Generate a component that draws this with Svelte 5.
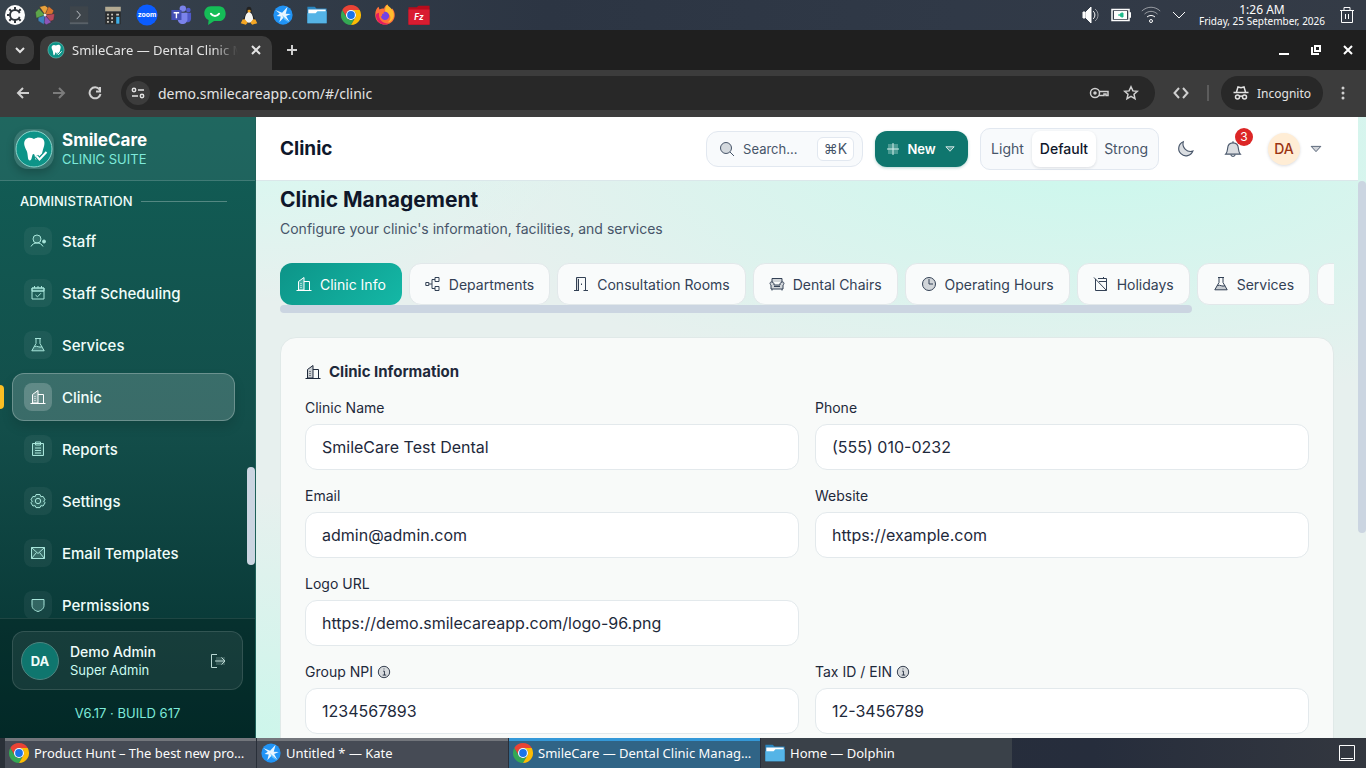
<script lang="ts">
	interface NavItem {
		label: string;
		icon: string;
	}

	interface Field {
		id: string;
		label: string;
		value: string;
		info?: boolean;
		solo?: boolean;
	}

	// Line icons on a 16 unit grid, stroked with the current colour
	const icons: Record<string, string> = {
		staff:
			'<circle cx="7" cy="6" r="4" fill="currentColor" fill-opacity=".15"/><path d="M1 13.500c1.200-2.200 3-3.500 6-3.500s4.800 1.300 6 3.500"/><circle cx="14" cy="8.500" r="1.500" fill="currentColor"/>',
		schedule:
			'<path d="M2 3h12v11H2z"/><path d="M2 6h12" /><path d="M2 3h12v3H2z" fill="currentColor" fill-opacity=".2"/><path d="M4.500 1v2M11.500 1v2M8 1v2M5.500 10l2 1.800 3.500-3.600"/>',
		flask:
			'<path d="M4 9.500 1.800 13.800h12.400L12 9.500c-3-1.200-5 1.200-8 0z" fill="currentColor" fill-opacity=".25" stroke="none"/><path d="M5 1.500h6M6 1.500v5L1.800 13.800h12.400L10 6.500v-5M4.300 9.500c3-1.200 5 1.800 7.800.2"/>',
		building:
			'<path d="M2.500 14V5.500l5.500-4V14z" fill="currentColor" fill-opacity=".2"/><path d="M.5 14.500h15M8 5.500h5.500V14M5 7v1M5 9v1M5 11v1"/>',
		report:
			'<path d="M2.500 2.500h11v12h-11z" fill="currentColor" fill-opacity=".15"/><path d="M5.500 1h5v3h-5zM5 7h6M5 9.500h6M5 12h6"/>',
		gear:
			'<path d="M6 1.500h4l.8 2.200 2.300-.3 2 3.400L13.600 8l1.500 1.800-2 3.200-2.300-.3-.8 1.900H6l-.8-1.900-2.300.3-2-3.200L2.400 8 .9 6.800l2-3.400 2.300.3z" fill="currentColor" fill-opacity=".15"/><circle cx="8" cy="8" r="2.700"/>',
		mail:
			'<path d="M1.500 2.500h13v11h-13z" fill="currentColor" fill-opacity=".2"/><path d="m1.500 2.500 6.500 6 6.500-6M1.500 13.500l5-6M14.500 13.500l-5-6"/>',
		shield:
			'<path d="M2 2.500h12v6c0 3-2.500 5-6 6-3.500-1-6-3-6-6z" fill="currentColor" fill-opacity=".2"/>',
		departments:
			'<path d="M.8 6.500h3v3h-3zM10 1.500h4v4h-4zM10 10.500h4v4h-4zM4 8h3M10 3.500H7v9h3"/>',
		door:
			'<path d="M3.500 14V1.500h9V14M1 14.500h5M10.500 14.500H15M5.500 14.500V3"/><path d="M3.500 1.500h2v13h-2z" fill="currentColor" fill-opacity=".2" stroke="none"/><path d="M8.500 7.500V9"/>',
		chair:
			'<path d="M3 6V2.500h10V6M3 6c-2-.5-2.700 2-1 3v4h12V9c1.700-1 1-3.500-1-3s-2 1.500-2 3H5c0-1.500 0-2.500-2-3zM3 13v1.500M13 13v1.500" fill="currentColor" fill-opacity=".2"/><path d="M5 10.500h6"/>',
		clock:
			'<circle cx="8" cy="8" r="6.500" fill="currentColor" fill-opacity=".2"/><path d="M8 3v5h4"/>',
		holiday:
			'<path d="M2.500 3v11.500h11V2.500H5M1 1.500l12.500 13M6 5.500h7.500M10.500 1v2"/>',
		search:
			'<circle cx="7" cy="7" r="5.500" fill="currentColor" fill-opacity=".2"/><path d="m11 11 4 4"/>',
		moon:
			'<path d="M6.500 1.500a6.500 6.500 0 1 0 8.500 8.300C10 11.500 5 7 6.500 1.500z" fill="currentColor" fill-opacity=".2"/>',
		bell:
			'<path d="M1.500 12.500c1.500-1.500 1.500-3 1.700-5 .2-3 2-5 4.800-5s4.600 2 4.800 5c.2 2 .2 3.500 1.700 5z" fill="currentColor" fill-opacity=".2"/><path d="M8 1v1.500M6 13c.5 2 3.500 2 4 0"/>',
		caret: '<path d="M2.500 5h11L8 11z" fill="currentColor" fill-opacity=".25"/>',
		info:
			'<circle cx="8" cy="8" r="6.500" fill="currentColor" fill-opacity=".15"/><path d="M7 7h1.500v4.500M6.500 11.500h4M7.500 4.500h1"/>',
		logout:
			'<path d="M6 4h9v8H6z" fill="currentColor" fill-opacity=".2" stroke="none"/><path d="M7 1.500H1.500v13H7M5 8h10M11.500 4.500 15 8l-3.500 3.500"/>'
	};

	const chromeLogo =
		'<path fill="#ea4335" d="M4.950 13A22 22 0 0 1 43.050 13H24a11 11 0 0 0-9.530 16.500z"/><path fill="#34a853" d="M4.950 13 14.470 29.500a11 11 0 0 0 19.060 0L24 46A22 22 0 0 1 4.950 13z"/><path fill="#fbbc04" d="M43.050 13A22 22 0 0 1 24 46l9.530-16.500A11 11 0 0 0 24 13z"/><circle cx="24" cy="24" r="11" fill="#fff"/><circle cx="24" cy="24" r="8.500" fill="#1a73e8"/>';
	const folderLogo =
		'<path fill="#2a86c0" d="M3 6h16l4 4h22v32H3z"/><path fill="#fff" d="M5 12h38v10H5z"/><path fill="#55b4e6" d="M3 20h18l4-4h20v26H3z"/>';
	const kateLogo =
		'<circle cx="24" cy="24" r="21" fill="#2093f5"/><path fill="#e8f5ff" d="m7 13 15 6 12-13-4 15 11 1-10 4 7 13-12-10-10 11 3-13-9-1 7-5z"/><path fill="#62c4ff" d="m22 24 15 17-11-8z"/>';

	const launchers = [
		{
			name: 'Photos',
			art: '<g stroke="#333" stroke-width="1"><path fill="#e9a23b" d="M24 24 12 6l12-3 8 6z"/><path fill="#d9742f" d="M24 24 32 5l11 9-3 9z"/><path fill="#b9485c" d="M24 24l21-3-2 14-8 3z"/><path fill="#8c55b8" d="m24 24 14 16-11 5-8-5z"/><path fill="#3d83bd" d="m24 24-2 21-13-8V27z"/><path fill="#5da64a" d="M24 24 5 31 3 18l8-8z"/></g><circle cx="24" cy="24" r="3" fill="#eee"/>'
		},
		{
			name: 'Terminal',
			art: '<path fill="#3e454b" d="M4 5h40v38H4z"/><path fill="#596168" d="M4 40h40v4H4z"/><path d="m19 15 8 9-8 9" fill="none" stroke="#c7cbce" stroke-width="2"/>'
		},
		{
			name: 'Calculator',
			art: '<path fill="#b3aa92" d="M7 6h34v10H7z"/><path fill="#2b2d2e" d="M7 17h34v27H7z"/><path fill="#c9c6be" d="M11 21h4v4h-4zM20 21h4v4h-4zM11 29h4v4h-4zM20 29h4v4h-4zM11 37h4v4h-4zM20 37h4v4h-4zM31 21h6v4h-6z"/><path fill="#3daee9" d="M31 28h7v15h-7z"/>'
		},
		{
			name: 'Zoom',
			art: '<circle cx="24" cy="24" r="23" fill="#0b5cff"/><text x="24" y="29" text-anchor="middle" font-family="Inter, sans-serif" font-size="15" font-weight="700" fill="#fff">zoom</text>'
		},
		{
			name: 'Teams',
			art: '<circle cx="28" cy="10" r="7" fill="#7b83eb"/><circle cx="40" cy="13" r="5" fill="#5059c9"/><path fill="#5059c9" d="M32 19h14v13c0 5-4 8-9 8z"/><path fill="#7b83eb" d="M17 19h21v14c0 14-21 14-21 0z"/><path fill="#4450b5" d="M3 13h22v22H3z"/><path stroke="#fff" stroke-width="3" d="M8 19h12M14 19v12"/>'
		},
		{
			name: 'Messages',
			art: '<path fill="#15bd57" d="M15 5h18c19 0 19 32 0 32H22L9 46l1-11C-5 29-1 5 15 5z"/><path d="M15 21c5 7 13 7 18 0" fill="none" stroke="#fff" stroke-width="4" stroke-linecap="round"/>'
		},
		{
			name: 'Tux',
			art: '<path fill="#222" d="M24 6c-6 0-6 8-6 13l-7 14c0 11 26 11 26 0l-7-14c0-5 0-13-6-13z"/><path fill="#f5f5f2" d="M24 17c-6 2-9 10-9 17 0 9 18 9 18 0 0-7-3-15-9-17z"/><path fill="#f5a623" d="m20 15 4-3 5 3-5 4zM10 34l5-1 6 8-4 4-11-3zM38 34l-5-1-6 8 4 4 11-3z"/>'
		},
		{ name: 'Kate', art: kateLogo },
		{ name: 'Dolphin', art: folderLogo },
		{ name: 'Chrome', art: chromeLogo },
		{
			name: 'Firefox',
			art: '<path fill="#ff7139" d="M5 12c2-3 3-5 5-6l2 6c5-3 9-2 10-2 1-4 3-7 7-9 1 5 5 7 9 12l2-3c4 5 6 11 5 17C41 51 6 50 3 27c-.7-6 0-11 2-15z"/><path fill="#ffbd2e" d="M29 1c1 5 17 10 14 26-2 8-8 13-13 13 9-6 8-18-5-22-2-6 0-13 4-17z"/><path fill="#e51c62" d="M4 26c3 18 19 22 29 17-13 0-24-8-22-24-5 1-7 3-7 7z"/><circle cx="24" cy="26" r="9" fill="#7542e5"/><path fill="#ff7139" d="M11 17c5-3 9-1 12 3-5 0-7 3-5 7-4 0-7-4-7-10z"/>'
		},
		{
			name: 'FileZilla',
			art: '<path fill="#b80c1c" d="M1 7h18l4-3h24v41H1z"/><path fill="#d91c31" d="M1 12h46v33H1z"/><text x="24" y="35" text-anchor="middle" font-family="Inter, sans-serif" font-size="18" font-weight="700" font-style="italic" fill="#fff">Fz</text>'
		}
	];

	const navItems: NavItem[] = [
		{ label: 'Staff', icon: 'staff' },
		{ label: 'Staff Scheduling', icon: 'schedule' },
		{ label: 'Services', icon: 'flask' },
		{ label: 'Clinic', icon: 'building' },
		{ label: 'Reports', icon: 'report' },
		{ label: 'Settings', icon: 'gear' },
		{ label: 'Email Templates', icon: 'mail' },
		{ label: 'Permissions', icon: 'shield' }
	];

	const tabs: NavItem[] = [
		{ label: 'Clinic Info', icon: 'building' },
		{ label: 'Departments', icon: 'departments' },
		{ label: 'Consultation Rooms', icon: 'door' },
		{ label: 'Dental Chairs', icon: 'chair' },
		{ label: 'Operating Hours', icon: 'clock' },
		{ label: 'Holidays', icon: 'holiday' },
		{ label: 'Services', icon: 'flask' },
		{ label: 'Insurance', icon: 'shield' }
	];

	const fields: Field[] = [
		{ id: 'clinic-name', label: 'Clinic Name', value: 'SmileCare Test Dental' },
		{ id: 'phone', label: 'Phone', value: '(555) 010-0232' },
		{ id: 'email', label: 'Email', value: 'admin@admin.com' },
		{ id: 'website', label: 'Website', value: 'https://example.com' },
		{ id: 'logo-url', label: 'Logo URL', value: 'https://demo.smilecareapp.com/logo-96.png', solo: true },
		{ id: 'group-npi', label: 'Group NPI', value: '1234567893', info: true },
		{ id: 'tax-id', label: 'Tax ID / EIN', value: '12-3456789', info: true }
	];

	const tasks = [
		{ title: 'Product Hunt – The best new products in tech', art: chromeLogo, state: 'open' },
		{ title: 'Untitled * — Kate', art: kateLogo, state: 'open' },
		{ title: 'SmileCare — Dental Clinic Management', art: chromeLogo, state: 'focused' },
		{ title: 'Home — Dolphin', art: folderLogo, state: 'idle' }
	];

	let activeNav = $state('Clinic');
	let activeTab = $state('Clinic Info');
	let contrast = $state('Default');
</script>

{#snippet icon(name: string, size = 16)}
	<svg class="icon" width={size} height={size} viewBox="0 0 16 16" aria-hidden="true">
		{@html icons[name]}
	</svg>
{/snippet}

{#snippet art(markup: string, size = 22)}
	<svg width={size} height={size} viewBox="0 0 48 48" aria-hidden="true">{@html markup}</svg>
{/snippet}

{#snippet tooth(size: number)}
	<svg width={size} height={size} viewBox="0 0 40 40" aria-hidden="true">
		<circle cx="20" cy="20" r="18" fill="#0d9488" stroke="#8fd6cd" stroke-width="1" />
		<path
			fill="#fff"
			d="M20 10c3-2 6-2 8.500-.5 3 2.500 2 7 .5 11l-1 4-3 3-1.500-1.500-2 2 1 3c-2 0-1-6-3-6s-1 6-3.500 6.500c-3 0-1.500-6-3.500-10-2-4-3.500-8-1-11 2.500-2.500 5.500-2 8.500-.5z"
		/>
		<path d="m22.500 27 3 3.500 7-7.500" fill="none" stroke="#0d9488" stroke-width="4" />
		<path d="m22.500 27 3 3.500 7-7.500" fill="none" stroke="#fff" stroke-width="2" />
	</svg>
{/snippet}

<div class="desktop">
	<header class="panel">
		<button class="launcher start" aria-label="Applications">
			<svg width="20" height="20" viewBox="0 0 20 20">
				<circle cx="10" cy="10" r="10" fill="#fcfcfc" />
				<circle cx="10" cy="10" r="5" fill="none" stroke="#30363c" stroke-width="2" />
				<path
					stroke="#30363c"
					stroke-width="2"
					d="M10 2v3M10 15v3M2 10h2M4.300 4.300l2 2M4.300 15.700l2-2M13.700 13.700l2 2M13.700 6.300l2-2"
				/>
				<path fill="#fcfcfc" d="m11 10 6-3v6z" />
			</svg>
		</button>
		{#each launchers as app (app.name)}
			<button class="launcher" aria-label={app.name}>{@render art(app.art)}</button>
		{/each}

		<div class="tray">
			<button class="tray-item" aria-label="Volume">
				<svg width="18" height="18" viewBox="0 0 18 18" fill="none" stroke="#fcfcfc">
					<path d="M1 6h2v6H1zM4 6l5-5v16l-5-5z" fill="#fcfcfc" />
					<path d="M11 5c2.500 2 2.500 6 0 8" />
					<path d="M13 3c4 3 4 9 0 12" opacity=".5" />
				</svg>
			</button>
			<button class="tray-item" aria-label="Battery">
				<svg width="20" height="14" viewBox="0 0 20 14" fill="none">
					<path d="M1 1.500h17v11H1zM18 5h1.500v4H18" stroke="#fcfcfc" stroke-width="1.500" />
					<path d="M3 3h13v8H3z" fill="#fcfcfc" />
					<path d="M7 7h2M9 7c0-2 2-2 3-2v4c-1 0-3 0-3-2z" fill="#1cb98a" stroke="#1cb98a" />
				</svg>
			</button>
			<button class="tray-item" aria-label="Network">
				<svg width="20" height="18" viewBox="0 0 20 18" fill="none" stroke="#fcfcfc">
					<circle cx="10" cy="15" r="1.500" />
					<path d="M6 11c2.500-2 5.500-2 8 0" />
					<path d="M3.500 8c4-3.500 9-3.500 13 0M.8 5c5.500-5 13-5 18.400 0" opacity=".5" />
				</svg>
			</button>
			<button class="tray-item narrow" aria-label="Show hidden icons">
				<svg width="14" height="10" viewBox="0 0 14 10" fill="none" stroke="#fcfcfc">
					<path d="m1 2 6 6 6-6" />
				</svg>
			</button>
			<div class="clock">
				<time class="time">1:26 AM</time>
				<span class="date">Friday, 25 September, 2026</span>
			</div>
			<button class="tray-item trash" aria-label="Trash">
				<svg width="16" height="18" viewBox="0 0 16 18" fill="none" stroke="#fcfcfc">
					<path d="M1 4.500h14M5 4V1.500h6V4M2.500 4.500v12h11v-12M6.500 8v5M9.500 8v5" />
				</svg>
			</button>
		</div>
	</header>

	<div class="tab-strip">
		<button class="tab-search" aria-label="Search tabs">
			<svg width="10" height="8" viewBox="0 0 10 8" fill="none" stroke="#e3e3e3" stroke-width="2">
				<path d="m1 2 4 4 4-4" />
			</svg>
		</button>
		<div class="browser-tab">
			{@render tooth(18)}
			<span class="browser-tab-title">SmileCare — Dental Clinic Management</span>
			<button class="bare" aria-label="Close tab">
				<svg width="10" height="10" viewBox="0 0 10 10" stroke="#e3e3e3" stroke-width="2">
					<path d="m1 1 8 8M9 1 1 9" />
				</svg>
			</button>
		</div>
		<button class="bare new-tab" aria-label="New tab">
			<svg width="12" height="12" viewBox="0 0 12 12" stroke="#d0d0d0" stroke-width="2">
				<path d="M6 1v10M1 6h10" />
			</svg>
		</button>
		<div class="window-controls">
			<button class="bare" aria-label="Minimize">
				<svg width="12" height="12" viewBox="0 0 12 12"><path fill="#fff" d="M1 9h10v2H1z" /></svg>
			</button>
			<button class="bare" aria-label="Restore">
				<svg width="12" height="12" viewBox="0 0 12 12" fill="none" stroke="#fff" stroke-width="2">
					<path d="M5 2h5v5H5zM2 3v7h7" />
				</svg>
			</button>
			<button class="bare" aria-label="Close window">
				<svg width="12" height="12" viewBox="0 0 12 12" stroke="#fff" stroke-width="2">
					<path d="m2 2 8 8M10 2l-8 8" />
				</svg>
			</button>
		</div>
	</div>

	<div class="toolbar">
		<button class="tool" aria-label="Back">
			<svg width="14" height="14" viewBox="0 0 14 14" fill="none" stroke="#d0d0d0" stroke-width="2">
				<path d="M13 7H2M7 2 2 7l5 5" />
			</svg>
		</button>
		<button class="tool" aria-label="Forward" disabled>
			<svg width="14" height="14" viewBox="0 0 14 14" fill="none" stroke="#7c7c7c" stroke-width="2">
				<path d="M1 7h11M7 2l5 5-5 5" />
			</svg>
		</button>
		<button class="tool" aria-label="Reload">
			<svg width="14" height="14" viewBox="0 0 14 14" fill="none" stroke="#d0d0d0" stroke-width="2">
				<path d="M11.500 3.500A5.500 5.500 0 1 0 12.500 8M12 1v4.500H8" />
			</svg>
		</button>
		<div class="omnibox">
			<button class="site-info" aria-label="View site information">
				<svg width="14" height="14" viewBox="0 0 14 14" fill="none" stroke="#e3e3e3" stroke-width="1.500">
					<circle cx="3" cy="4" r="1.700" />
					<path d="M7 4h6M1 10h6" />
					<circle cx="11" cy="10" r="1.700" />
				</svg>
			</button>
			<input class="url" aria-label="Address" value="demo.smilecareapp.com/#/clinic" />
			<button class="bare" aria-label="Saved passwords">
				<svg width="20" height="14" viewBox="0 0 20 14" fill="none" stroke="#d0d0d0" stroke-width="1.500">
					<circle cx="6" cy="7" r="4.500" />
					<circle cx="6" cy="7" r="1" fill="#d0d0d0" />
					<path d="M10 5.500h9v4h-2v-1.500h-2v1.500h-5" />
				</svg>
			</button>
			<button class="bare" aria-label="Bookmark">
				<svg width="16" height="16" viewBox="0 0 16 16" fill="none" stroke="#d0d0d0" stroke-width="1.500">
					<path d="m8 1.800 1.900 4.100 4.400.4-3.300 3 1 4.400L8 11.400l-4 2.300 1-4.400-3.300-3 4.400-.4z" />
				</svg>
			</button>
		</div>
		<button class="tool code" aria-label="Developer tools">
			<svg width="16" height="12" viewBox="0 0 16 12" fill="none" stroke="#d0d0d0" stroke-width="2">
				<path d="M6 1 1.500 6 6 11M10 1l4.500 5L10 11" />
			</svg>
		</button>
		<span class="divider"></span>
		<button class="incognito">
			<svg width="16" height="16" viewBox="0 0 16 16" fill="none" stroke="#e3e3e3" stroke-width="1.500">
				<path d="M.5 7.500h15M3.500 7 5 2l3 .8L11 2l1.500 5" />
				<circle cx="4.500" cy="12" r="2" />
				<circle cx="11.500" cy="12" r="2" />
				<path d="M6.500 11.500c1-.7 2-.7 3 0" />
			</svg>
			Incognito
		</button>
		<button class="tool menu" aria-label="Menu">
			<svg width="4" height="14" viewBox="0 0 4 14" fill="#d0d0d0">
				<circle cx="2" cy="2" r="1.500" /><circle cx="2" cy="7" r="1.500" /><circle cx="2" cy="12" r="1.500" />
			</svg>
		</button>
	</div>

	<div class="app">
		<aside class="sidebar">
			<div class="brand">
				<span class="brand-logo">{@render tooth(40)}</span>
				<div class="brand-text">
					<strong>SmileCare</strong>
					<span>CLINIC SUITE</span>
				</div>
			</div>

			<nav class="nav">
				<div class="nav-heading">ADMINISTRATION</div>
				{#each navItems as item (item.label)}
					<a
						class="nav-item"
						class:active={activeNav === item.label}
						href="#/{item.label.toLowerCase()}"
						onclick={() => (activeNav = item.label)}
					>
						<span class="nav-icon">{@render icon(item.icon)}</span>
						{item.label}
					</a>
				{/each}
				<span class="nav-scroll"></span>
			</nav>

			<div class="sidebar-footer">
				<div class="user-card">
					<span class="user-avatar">DA</span>
					<div class="user-text">
						<span class="user-name">Demo Admin</span>
						<span class="user-role">Super Admin</span>
					</div>
					<button class="logout" aria-label="Sign out">{@render icon('logout')}</button>
				</div>
				<span class="version">V6.17 · BUILD 617</span>
			</div>
		</aside>

		<div class="main">
			<header class="topbar">
				<h1>Clinic</h1>
				<button class="search">
					{@render icon('search')}
					<span>Search…</span>
					<kbd>⌘K</kbd>
				</button>
				<button class="new">
					<svg width="12" height="12" viewBox="0 0 12 12">
						<path fill="#4b9c94" d="M1 1h10v10H1z" />
						<path stroke="#d5efeb" stroke-width="1" d="M6 0v12M0 6h12" />
					</svg>
					New
					{@render icon('caret', 12)}
				</button>
				<div class="segmented" role="group" aria-label="Contrast">
					{#each ['Light', 'Default', 'Strong'] as level (level)}
						<button
							class:selected={contrast === level}
							aria-pressed={contrast === level}
							onclick={() => (contrast = level)}
						>
							{level}
						</button>
					{/each}
				</div>
				<button class="round" aria-label="Dark mode">{@render icon('moon', 18)}</button>
				<button class="round" aria-label="Notifications">
					{@render icon('bell', 18)}
					<span class="badge">3</span>
				</button>
				<button class="account" aria-label="Account menu">
					<span class="account-avatar">DA</span>
					{@render icon('caret', 14)}
				</button>
			</header>

			<main class="content">
				<div class="page-head">
					<h2>Clinic Management</h2>
					<p>Configure your clinic's information, facilities, and services</p>
				</div>

				<div class="tabs" role="tablist">
					{#each tabs as tab (tab.label)}
						<button
							class="tab"
							class:active={activeTab === tab.label}
							role="tab"
							aria-selected={activeTab === tab.label}
							onclick={() => (activeTab = tab.label)}
						>
							{@render icon(tab.icon)}
							{tab.label}
						</button>
					{/each}
				</div>
				<div class="tabs-scroll"></div>

				<section class="card">
					<h3>{@render icon('building')} Clinic Information</h3>
					<div class="form">
						{#each fields as field (field.id)}
							<div class="field" class:solo={field.solo}>
								<label for={field.id}>
									{field.label}
									{#if field.info}{@render icon('info', 14)}{/if}
								</label>
								<input id={field.id} type="text" value={field.value} />
							</div>
						{/each}
					</div>
				</section>
			</main>
			<span class="page-scroll"></span>
		</div>
	</div>

	<footer class="taskbar">
		{#each tasks as task (task.title)}
			<button class="task {task.state}">
				{@render art(task.art)}
				<span>{task.title}</span>
			</button>
		{/each}
		<button class="show-desktop" aria-label="Show desktop">
			<svg width="16" height="16" viewBox="0 0 16 16" fill="none" stroke="#fcfcfc">
				<path d="M.5.5h15v15H.5zM2 13.500h12" />
			</svg>
		</button>
	</footer>
</div>

<style>
	:global(body) {
		overflow: hidden;
	}

	.desktop {
		height: 100vh;
		display: flex;
		flex-direction: column;
		font-family: Inter, 'Liberation Sans', sans-serif;
		color: #1e293b;
	}

	.desktop *,
	.desktop *::before,
	.desktop *::after {
		box-sizing: border-box;
	}

	button {
		border: 0;
		padding: 0;
		background: none;
		font: inherit;
		color: inherit;
		display: flex;
		align-items: center;
		justify-content: center;
		flex-shrink: 0;
	}

	svg {
		display: block;
		flex-shrink: 0;
	}

	.icon {
		fill: none;
		stroke: currentColor;
		stroke-width: 1;
	}

	h1,
	h2,
	h3,
	p {
		margin: 0;
	}

	/* Desktop panel */
	.panel {
		height: 30px;
		flex-shrink: 0;
		display: flex;
		background: linear-gradient(90deg, #38434d, #2c3543 40%, #303947 70%, #343b46);
		color: #fcfcfc;
		font-family: 'Noto Sans', sans-serif;
	}

	.launcher {
		width: 34px;
	}

	.launcher.start {
		width: 28px;
		padding-left: 2px;
	}

	.tray {
		display: flex;
		margin-left: auto;
		padding-right: 4px;
	}

	.tray-item {
		width: 30px;
	}

	.tray-item.narrow {
		width: 26px;
	}

	.clock {
		width: 140px;
		display: flex;
		flex-direction: column;
		align-items: center;
		justify-content: center;
		white-space: nowrap;
	}

	.time {
		font-size: 12px;
		line-height: 12px;
	}

	.date {
		font-size: 10px;
		line-height: 10px;
	}

	/* Browser window */
	.tab-strip {
		height: 40px;
		flex-shrink: 0;
		display: flex;
		align-items: flex-end;
		gap: 6px;
		padding-left: 6px;
		background: #1f1f1f;
		font-family: 'Noto Sans', sans-serif;
	}

	.tab-search {
		width: 28px;
		height: 28px;
		margin-bottom: 6px;
		border-radius: 10px;
		background: #3a3a3a;
	}

	.browser-tab {
		width: 232px;
		height: 34px;
		display: flex;
		align-items: center;
		gap: 7px;
		padding: 0 11px 6px 7px;
		border-radius: 10px 10px 0 0;
		background: #3c3c3c;
		color: #e3e3e3;
		font-size: 13px;
	}

	.browser-tab-title {
		flex: 1;
		margin-right: 6px;
		overflow: hidden;
		white-space: nowrap;
		mask-image: linear-gradient(90deg, #000 85%, transparent);
	}

	.new-tab {
		height: 40px;
		width: 28px;
	}

	.window-controls {
		display: flex;
		gap: 20px;
		height: 40px;
		margin-left: auto;
		padding-right: 12px;
	}

	.toolbar {
		height: 47px;
		flex-shrink: 0;
		display: flex;
		align-items: center;
		padding: 0 5px 1px;
		background: #3c3c3c;
		font-family: 'Noto Sans', sans-serif;
		color: #e3e3e3;
	}

	.tool {
		width: 36px;
		height: 36px;
	}

	.omnibox {
		flex: 1;
		min-width: 0;
		height: 34px;
		display: flex;
		align-items: center;
		gap: 14px;
		margin: 0 8px;
		padding: 0 16px 0 5px;
		border-radius: 17px;
		background: #282828;
	}

	.site-info {
		width: 24px;
		height: 24px;
		border-radius: 50%;
		background: #3c3c3c;
	}

	.url {
		flex: 1;
		min-width: 0;
		margin-left: -6px;
		padding: 0;
		border: 0;
		outline: 0;
		background: none;
		color: #e3e3e3;
		font: 14px 'Noto Sans', sans-serif;
	}

	.divider {
		width: 2px;
		height: 16px;
		margin: 0 12px 0 8px;
		background: #5c5c5c;
	}

	.incognito {
		height: 34px;
		gap: 8px;
		padding: 0 12px;
		margin-right: 2px;
		border-radius: 17px;
		background: #282828;
		font-size: 12px;
	}

	/* Sidebar */
	.app {
		flex: 1;
		min-height: 0;
		display: flex;
	}

	.sidebar {
		width: 256px;
		flex-shrink: 0;
		display: flex;
		flex-direction: column;
		background: linear-gradient(180deg, #115e56, #134e4a 50%, #042f2e);
		border-right: 1px solid #1f6159;
		color: #f0fdfa;
	}

	.brand {
		height: 64px;
		flex-shrink: 0;
		display: flex;
		align-items: center;
		gap: 8px;
		padding: 0 14px;
		border-bottom: 1px solid rgba(255, 255, 255, 0.15);
		background: rgba(255, 255, 255, 0.06);
	}

	.brand-logo {
		border-radius: 14px;
		background: rgba(255, 255, 255, 0.12);
		box-shadow: 0 4px 8px rgba(0, 0, 0, 0.2);
	}

	.brand-text {
		display: flex;
		flex-direction: column;
	}

	.brand-text strong {
		font-size: 17px;
		line-height: 20px;
		color: #fff;
	}

	.brand-text span {
		font-size: 13px;
		line-height: 18px;
		color: #7eeada;
	}

	.nav {
		position: relative;
		flex: 1;
		min-height: 0;
		overflow: hidden;
		display: flex;
		flex-direction: column;
		gap: 4px;
		padding: 8px 20px 0 12px;
	}

	.nav-heading {
		flex-shrink: 0;
		display: flex;
		align-items: center;
		gap: 8px;
		height: 24px;
		padding: 0 8px;
		font-size: 13px;
		font-weight: 500;
	}

	.nav-heading::after {
		content: '';
		flex: 1;
		height: 1px;
		background: rgba(255, 255, 255, 0.28);
	}

	.nav-item {
		position: relative;
		flex-shrink: 0;
		height: 48px;
		display: flex;
		align-items: center;
		gap: 10px;
		padding: 0 11px;
		border: 1px solid transparent;
		border-radius: 12px;
		color: #f0fdfa;
		font-size: 15px;
		font-weight: 500;
		text-decoration: none;
	}

	.nav-item.active {
		background: rgba(255, 255, 255, 0.17);
		border-color: rgba(255, 255, 255, 0.25);
		box-shadow: 0 6px 12px rgba(0, 0, 0, 0.12);
	}

	.nav-item.active::before {
		content: '';
		position: absolute;
		left: -13px;
		top: 11px;
		width: 4px;
		height: 24px;
		border-radius: 0 4px 4px 0;
		background: #fbbf24;
	}

	.nav-icon {
		width: 28px;
		height: 28px;
		display: grid;
		place-items: center;
		border-radius: 8px;
		background: rgba(255, 255, 255, 0.05);
		color: #a7e5da;
	}

	.active .nav-icon {
		background: rgba(255, 255, 255, 0.2);
		color: #fff;
	}

	.nav-scroll {
		position: absolute;
		right: 0;
		bottom: 53px;
		width: 8px;
		height: 98px;
		border-radius: 4px;
		background: #cbd5e1;
	}

	.sidebar-footer {
		display: flex;
		flex-direction: column;
		flex-shrink: 0;
		gap: 14px;
		height: 120px;
		padding: 12px;
		border-top: 1px solid rgba(255, 255, 255, 0.1);
		background: rgba(0, 25, 22, 0.3);
	}

	.user-card {
		display: flex;
		align-items: center;
		gap: 11px;
		height: 59px;
		padding: 0 8px;
		border: 1px solid rgba(255, 255, 255, 0.12);
		border-radius: 12px;
		background: rgba(255, 255, 255, 0.07);
	}

	.user-avatar {
		width: 38px;
		height: 38px;
		display: grid;
		place-items: center;
		border: 1px solid #4d8580;
		border-radius: 50%;
		background: #0f766e;
		font-size: 13px;
		font-weight: 700;
	}

	.user-text {
		flex: 1;
		display: flex;
		flex-direction: column;
		font-size: 14px;
		line-height: 19px;
	}

	.user-name {
		font-weight: 500;
	}

	.user-role {
		font-size: 13px;
		color: #ccfbf1;
	}

	.logout {
		width: 32px;
		height: 32px;
		color: #b9d8d3;
	}

	.version {
		text-align: center;
		font-size: 13px;
		line-height: 18px;
		color: #7eeada;
	}

	/* Main column */
	.main {
		position: relative;
		flex: 1;
		min-width: 0;
		display: flex;
		flex-direction: column;
		padding-right: 8px;
		background:
			radial-gradient(ellipse 60% 40% at 76% 6%, #cbf8ed, rgba(203, 248, 237, 0)),
			radial-gradient(ellipse 30% 30% at 0 0, #d5faf1, rgba(213, 250, 241, 0)),
			radial-gradient(ellipse 30% 40% at 0 100%, #cdf6eb, rgba(205, 246, 235, 0)),
			#e7f0ee;
	}

	.topbar {
		height: 64px;
		flex-shrink: 0;
		display: flex;
		align-items: center;
		padding: 0 35px 0 24px;
		border-bottom: 1px solid #dbe7ea;
		background: #fff;
		color: #475569;
	}

	.topbar h1 {
		margin-right: auto;
		font-size: 19px;
		line-height: 24px;
		font-weight: 700;
		color: #0f172a;
	}

	.search {
		width: 157px;
		height: 36px;
		justify-content: flex-start;
		gap: 8px;
		padding: 0 8px 0 12px;
		margin-right: 12px;
		border: 1px solid #e2e8f0;
		border-radius: 12px;
		background: #f8fafc;
		font-size: 13px;
	}

	.search kbd {
		margin-left: auto;
		padding: 0 6px;
		border: 1px solid #e2e8f0;
		border-radius: 6px;
		background: #fff;
		font: 14px/22px Inter, 'DejaVu Sans', sans-serif;
	}

	.new {
		width: 93px;
		height: 36px;
		gap: 8px;
		margin-right: 12px;
		border-radius: 12px;
		background: #0f766e;
		box-shadow: 0 1px 3px rgba(15, 118, 110, 0.3);
		color: #fff;
		font-size: 13px;
		font-weight: 600;
	}

	.segmented {
		display: flex;
		height: 42px;
		padding: 2px;
		border: 1px solid #e2e8f0;
		border-radius: 10px;
		background: #f8fafc;
	}

	.segmented button {
		padding: 0 8px;
		border-radius: 8px;
		font-size: 14px;
	}

	.segmented .selected {
		background: #fff;
		box-shadow: 0 1px 3px rgba(15, 23, 42, 0.12);
		color: #0f172a;
		font-weight: 500;
	}

	.round {
		position: relative;
		width: 36px;
		height: 36px;
		margin-left: 8px;
	}

	.round + .round {
		margin-left: 12px;
	}

	.badge {
		position: absolute;
		top: -3px;
		right: -2px;
		width: 18px;
		height: 18px;
		border-radius: 50%;
		background: #dc2626;
		color: #fff;
		font-size: 12px;
		line-height: 18px;
	}

	.account {
		gap: 9px;
		margin-left: 17px;
	}

	.account-avatar {
		width: 32px;
		height: 32px;
		display: grid;
		place-items: center;
		border-radius: 50%;
		background: #ffedd5;
		box-shadow: 0 1px 3px rgba(15, 23, 42, 0.15);
		color: #9a3412;
		font-size: 14px;
		font-weight: 500;
	}

	.content {
		flex: 1;
		min-height: 0;
		overflow: hidden;
		padding: 4px 24px 0;
	}

	.page-head {
		padding-bottom: 24px;
	}

	.page-head h2 {
		font-size: 21px;
		line-height: 30px;
		font-weight: 700;
		color: #0f172a;
	}

	.page-head p {
		margin-top: 4px;
		font-size: 14px;
		line-height: 20px;
		color: #475569;
	}

	.tabs {
		display: flex;
		gap: 7px;
		overflow: hidden;
	}

	.tab {
		height: 42px;
		gap: 8px;
		padding: 0 15px;
		border: 1px solid #e2e8ea;
		border-radius: 12px;
		background: #f9fbfb;
		color: #334155;
		font-size: 14px;
	}

	.tab.active {
		border-color: transparent;
		background: linear-gradient(135deg, #0d9488, #14b8a6) border-box;
		color: #fff;
	}

	.tabs-scroll {
		width: 86.5%;
		height: 8px;
		margin-bottom: 24px;
		border-radius: 4px;
		background: #cbd5e1;
	}

	.card {
		padding: 24px;
		border: 1px solid #e0e9e8;
		border-radius: 16px;
		background: #f8faf9;
	}

	.card h3 {
		display: flex;
		align-items: center;
		gap: 8px;
		margin-bottom: 16px;
		font-size: 15px;
		line-height: 20px;
		font-weight: 700;
	}

	.form {
		display: grid;
		grid-template-columns: 1fr 1fr;
		gap: 16px;
	}

	.field {
		display: flex;
		flex-direction: column;
		gap: 6px;
	}

	.field.solo,
	.field.solo + .field {
		grid-column: 1;
	}

	.field label {
		display: flex;
		align-items: center;
		gap: 4px;
		font-size: 14px;
		line-height: 20px;
	}

	.field input {
		width: 100%;
		height: 46px;
		padding: 0 16px;
		border: 1px solid #e3e9ec;
		border-radius: 12px;
		background: #fff;
		color: #1e293b;
		font: 16px Inter, 'Liberation Sans', sans-serif;
	}

	.page-scroll {
		position: absolute;
		top: 64px;
		right: 0;
		width: 8px;
		height: 352px;
		border-radius: 4px;
		background: #cbd5e1;
	}

	/* Task switcher */
	.taskbar {
		height: 30px;
		flex-shrink: 0;
		display: flex;
		gap: 1px;
		padding-left: 5px;
		background: linear-gradient(90deg, #2a3038, #262d3c 80%, #33373f);
		color: #fcfcfc;
		font: 13px 'Noto Sans', sans-serif;
	}

	.task {
		flex: 0 1 251px;
		min-width: 0;
		justify-content: flex-start;
		gap: 4px;
		padding: 0 6px 0 3px;
		background: #3a4149;
	}

	.task span {
		overflow: hidden;
		white-space: nowrap;
		text-overflow: ellipsis;
	}

	.task.open {
		background: #464b55;
		box-shadow: inset 0 3px #73767c;
	}

	.task.focused {
		background: #306486;
		box-shadow: inset 0 3px #3498d8;
	}

	.show-desktop {
		width: 38px;
		margin-left: auto;
	}
</style>
